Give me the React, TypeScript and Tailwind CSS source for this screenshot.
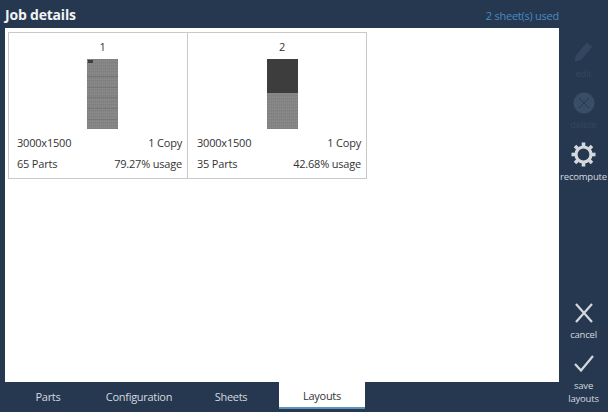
import { useId } from 'react'

const sheets = [
  { id: 1, size: '3000x1500', copies: '1 Copy', parts: '65 Parts', usage: '79.27% usage', scrap: 0 },
  { id: 2, size: '3000x1500', copies: '1 Copy', parts: '35 Parts', usage: '42.68% usage', scrap: 34 },
]

function SheetPreview({ scrap, first }: { scrap: number; first: boolean }) {
  const id = useId()
  return (
    <svg width="31" height="70" viewBox="0 0 31 70" className="block">
      <defs>
        <pattern id={id} width="4" height="3" patternUnits="userSpaceOnUse">
          <rect width="4" height="3" fill="#888888" />
          <rect width="3" height="2" fill="#7f7f7f" />
          <rect x="1" y="1" width="1" height="1" fill="#8d8d8d" />
        </pattern>
      </defs>
      <rect width="31" height="70" fill={`url(#${id})`} />
      {scrap > 0 && <rect width="31" height={scrap} fill="#3d3d3d" />}
      {first && <rect x="1" y="1" width="5" height="3" fill="#3f3f3f" />}
      {first &&
        [17, 28, 38, 49, 60].map((y) => <rect key={y} y={y} width="31" height="1" fill="#777777" />)}
    </svg>
  )
}

function SheetCard({ sheet, first }: { sheet: (typeof sheets)[number]; first: boolean }) {
  return (
    <div className={`w-[180px] h-[147px] border border-[#c9c9c9] pr-[5px] text-[11px] tracking-[-0.2px] leading-[16px] text-[#333] ${first ? 'pl-[8px]' : '-ml-px pl-[9px]'}`}>
      <div className="mt-[6px] ml-[6px] text-center">{sheet.id}</div>
      <div className="mt-[4px] ml-[6px] flex justify-center">
        <SheetPreview scrap={sheet.scrap} first={first} />
      </div>
      <div className="mt-[6px] flex justify-between">
        <span>{sheet.size}</span>
        <span>{sheet.copies}</span>
      </div>
      <div className="mt-[5px] flex justify-between">
        <span>{sheet.parts}</span>
        <span>{sheet.usage}</span>
      </div>
    </div>
  )
}

function PencilIcon() {
  return (
    <svg width="19" height="20" viewBox="0 0 19 20" fill="#33465f" className="block">
      <path d="M12.5 0.5 L18.5 4.5 L7.5 17.5 Q4 19.5 1 19.5 Q0.5 16.5 2 13.5 Z" />
    </svg>
  )
}

function DeleteIcon() {
  return (
    <svg width="22" height="22" viewBox="0 0 22 22" className="block">
      <circle cx="11" cy="11" r="10.5" fill="#3a4d66" />
      <path d="M6 6 L16 16 M16 6 L6 16" stroke="#263850" strokeWidth="1" />
    </svg>
  )
}

function GearIcon() {
  return (
    <svg width="25" height="25" viewBox="0 0 25 25" fill="none" stroke="#d5d9de" className="block">
      <circle cx="12.5" cy="12.5" r="7.5" strokeWidth="3.2" />
      <g strokeWidth="3.6">
        <path d="M12.5 0.5 V4" />
        <path d="M12.5 21 V24.5" />
        <path d="M0.5 12.5 H4" />
        <path d="M21 12.5 H24.5" />
        <path d="M4 4 L6.5 6.5" />
        <path d="M18.5 18.5 L21 21" />
        <path d="M4 21 L6.5 18.5" />
        <path d="M18.5 6.5 L21 4" />
      </g>
    </svg>
  )
}

const tabs = ['Parts', 'Configuration', 'Sheets']

export default function App() {
  return (
    <div className="w-[608px] h-[412px] bg-[#263850] flex overflow-hidden font-['Open_Sans',sans-serif]">
      <div className="w-[559px] shrink-0 flex flex-col">
        <header className="h-[28px] flex items-center justify-between pl-[5px]">
          <h1 className="text-[14px] tracking-[-0.2px] font-bold text-[#f2f3f5] leading-[28px] pt-[2px]">Job details</h1>
          <span className="text-[11px] tracking-[-0.25px] text-[#4a8ac4] pt-[5px]">2 sheet(s) used</span>
        </header>

        <main className="ml-[5px] flex-1 bg-white pl-[3px] pt-[4px] flex items-start">
          {sheets.map((s, i) => (
            <SheetCard key={s.id} sheet={s} first={i === 0} />
          ))}
        </main>

        <nav className="h-[30px] flex text-[11px] tracking-[-0.3px] leading-[30px] text-center text-[#d5d9de]">
          {tabs.map((t, i) => (
            <div key={t} className={i === 0 ? 'ml-[5px] w-[86px]' : i === 1 ? 'w-[96px]' : 'w-[88px]'}>
              {t}
            </div>
          ))}
          <div className="ml-[4px] w-[86px] h-[27px] leading-[28px] bg-white text-[#333] border-b-2 border-[#5f93bd]">Layouts</div>
        </nav>
      </div>

      <aside className="w-[49px] shrink-0 flex flex-col items-center pt-[42px] pb-[7px] text-[9.5px] tracking-[-0.2px] leading-[13px] text-center text-[#d5d9de]">
        <PencilIcon />
        <span className="mt-[5px] text-[#33465f]">edit</span>
        <div className="mt-[12px]">
          <DeleteIcon />
        </div>
        <span className="mt-[4px] text-[#33465f]">delete</span>
        <div className="mt-[11px]">
          <GearIcon />
        </div>
        <span className="mt-[3px]">recompute</span>

        <svg width="20" height="20" viewBox="0 0 20 20" stroke="#d5d9de" strokeWidth="2.2" fill="none" className="block mt-auto">
          <path d="M2 1 L18 19 M18 1 L2 19" />
        </svg>
        <span className="mt-[5px]">cancel</span>
        <svg width="20" height="17" viewBox="0 0 20 17" stroke="#d5d9de" strokeWidth="2.2" fill="none" className="block mt-[14px]">
          <path d="M1 9 L7 15.5 L19 1" />
        </svg>
        <span className="mt-[7px]">
          save
          <br />
          layouts
        </span>
      </aside>
    </div>
  )
}
